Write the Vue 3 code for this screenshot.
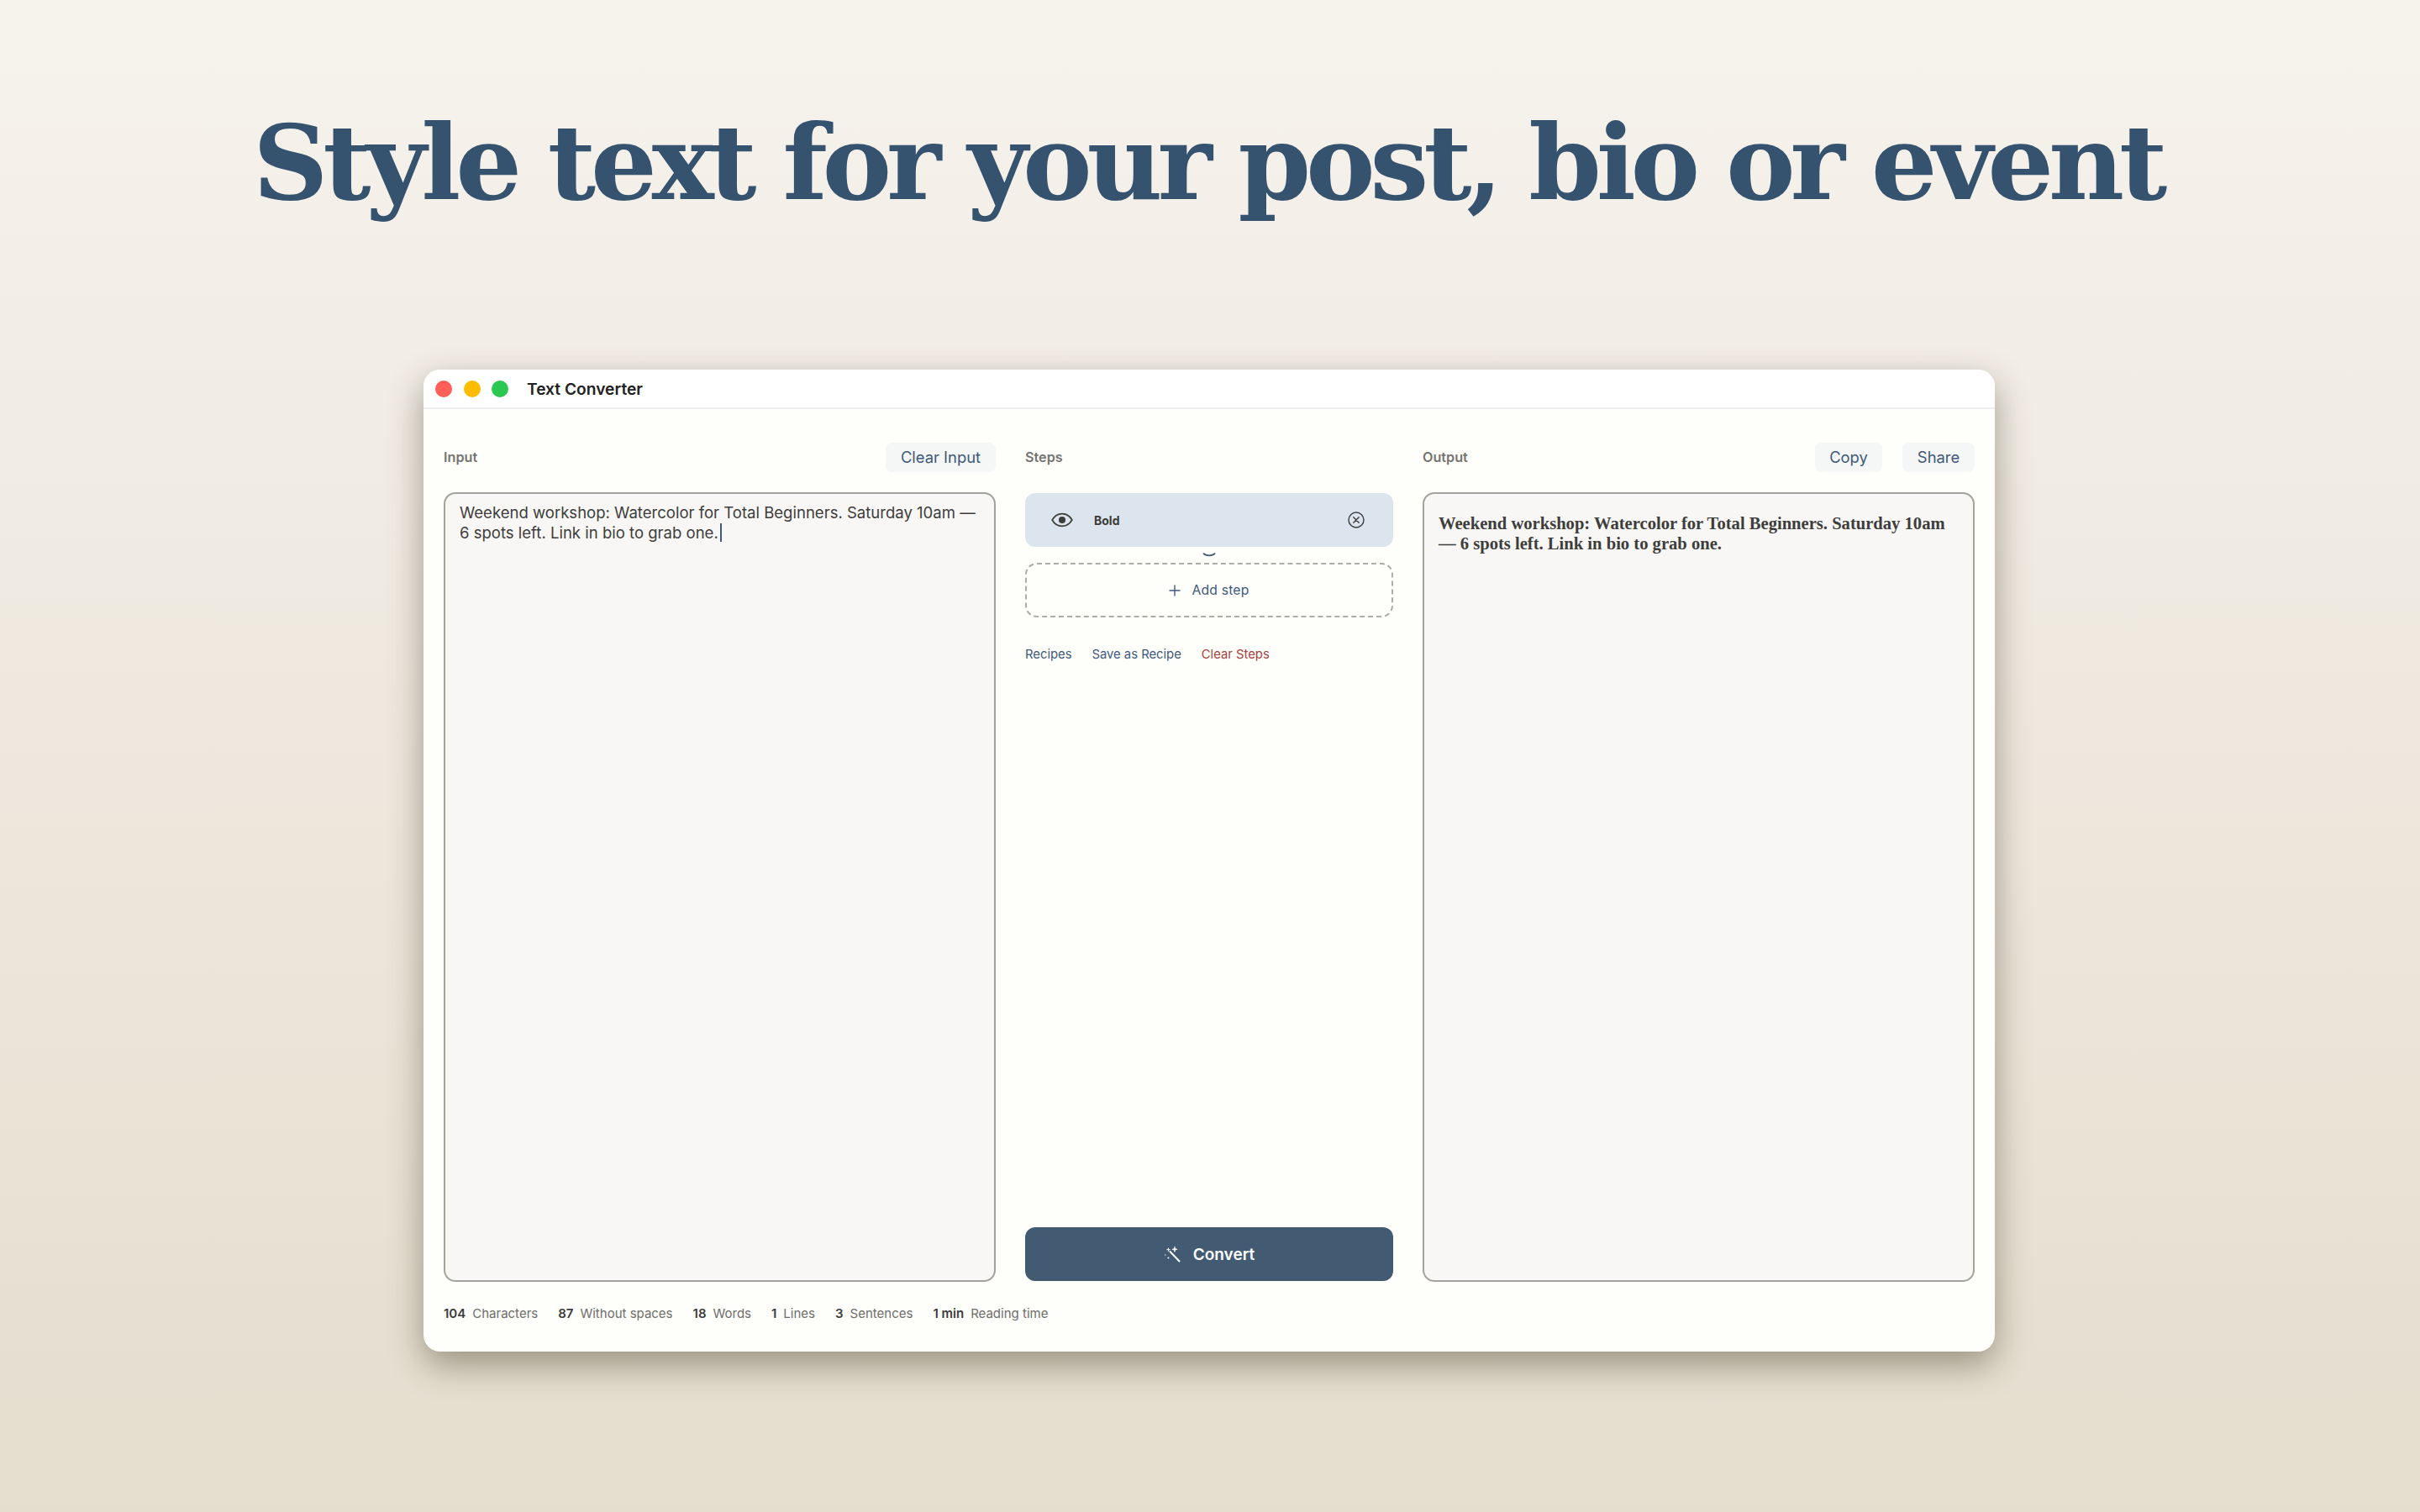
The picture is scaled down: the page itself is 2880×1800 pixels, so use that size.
<script setup>
const stats = [
  { n: '104', l: 'Characters' },
  { n: '87', l: 'Without spaces' },
  { n: '18', l: 'Words' },
  { n: '1', l: 'Lines' },
  { n: '3', l: 'Sentences' },
  { n: '1 min', l: 'Reading time' }
]
const sample = 'Weekend workshop: Watercolor for Total Beginners. Saturday 10am — 6 spots left. Link in bio to grab one.'
</script>

<template>
  <div class="page">
    <h1 class="headline">Style text for your post, bio or event</h1>
    <div class="window">
      <header class="titlebar">
        <div class="lights">
          <span class="light red"></span>
          <span class="light yellow"></span>
          <span class="light green"></span>
        </div>
        <span class="app-name">Text Converter</span>
      </header>
      <main class="content">
        <section class="col">
          <div class="col-head">
            <span class="label">Input</span>
            <button class="ghost">Clear Input</button>
          </div>
          <div class="editor input-box">{{ sample }}<span class="caret"></span></div>
        </section>

        <section class="col">
          <div class="col-head">
            <span class="label">Steps</span>
          </div>
          <div class="steps">
            <div class="step">
              <svg class="eye" viewBox="0 0 26 18" fill="none" stroke="currentColor" stroke-width="1.7">
                <path d="M1.2 9C4 4 8 1.6 13 1.6S22 4 24.8 9C22 14 18 16.4 13 16.4S4 14 1.2 9Z" />
                <circle cx="13" cy="9" r="3.2" fill="currentColor" />
              </svg>
              <span class="step-name">Bold</span>
              <svg class="close" viewBox="0 0 20 20" fill="none" stroke="currentColor" stroke-width="1.4" stroke-linecap="round">
                <circle cx="10" cy="10" r="9" />
                <path d="M6.8 6.8l6.4 6.4M13.2 6.8l-6.4 6.4" />
              </svg>
            </div>
            <svg class="chevron" viewBox="0 0 16 6" fill="none" stroke="currentColor" stroke-width="1.8" stroke-linecap="round">
              <path d="M1.5 1.2C4 4 12 4 14.5 1.2" />
            </svg>
            <button class="add-step">
              <svg class="plus" viewBox="0 0 14 14" fill="none" stroke="currentColor" stroke-width="1.4" stroke-linecap="round">
                <path d="M7 1v12M1 7h12" />
              </svg>
              <span>Add step</span>
            </button>
            <div class="links">
              <span class="link">Recipes</span>
              <span class="link">Save as Recipe</span>
              <span class="link danger">Clear Steps</span>
            </div>
            <button class="convert">
              <svg class="wand" viewBox="0 0 20 20" fill="none" stroke="currentColor" stroke-linecap="round" stroke-linejoin="round">
                <path d="M7.5 7l11 11.5" stroke-width="2" />
                <path d="M13 1.2l.7 2.4 2.4.7-2.4.7-.7 2.4-.7-2.4-2.4-.7 2.4-.7z" fill="currentColor" stroke-width=".6" />
                <path d="M5.5 3v3.4M3.8 4.7h3.4" stroke-width="1" />
                <circle cx="1.8" cy="11" r=".7" fill="currentColor" stroke="none" />
                <circle cx="5.4" cy="14.6" r="1" fill="currentColor" stroke="none" />
              </svg>
              <span>Convert</span>
            </button>
          </div>
        </section>

        <section class="col">
          <div class="col-head">
            <span class="label">Output</span>
            <div class="actions">
              <button class="ghost copy">Copy</button>
              <button class="ghost share">Share</button>
            </div>
          </div>
          <div class="editor output-box">{{ sample }}</div>
        </section>
      </main>
      <footer class="stats">
        <span v-for="s in stats" :key="s.l" class="stat"><b>{{ s.n }}</b><span>{{ s.l }}</span></span>
      </footer>
    </div>
  </div>
</template>

<style>
html, body { margin: 0; padding: 0; }
</style>

<style scoped>
.page {
  width: 2880px;
  height: 1800px;
  box-sizing: border-box;
  overflow: hidden;
  background: linear-gradient(180deg, #f6f3ed 0%, #e5ddce 100%);
  font-family: Inter, "Liberation Sans", sans-serif;
}
.headline {
  margin: 0;
  height: 440px;
  box-sizing: border-box;
  padding: 119px 6px 0 0;
  text-align: center;
  font-family: "DejaVu Serif", serif;
  font-weight: 700;
  font-size: 124px;
  line-height: 150px;
  letter-spacing: -6.2px;
  color: #35526f;
  white-space: nowrap;
}
.window {
  width: 1870px;
  height: 1169px;
  margin-left: 504px;
  display: flex;
  flex-direction: column;
  background: #fefefb;
  border-radius: 20px;
  box-shadow: 0 16px 42px rgba(60, 50, 30, 0.45);
  overflow: visible;
}
.titlebar {
  height: 47px;
  box-sizing: border-box;
  display: flex;
  align-items: center;
  background: #fff;
  border-bottom: 2px solid #eeeff0;
  border-radius: 20px 20px 0 0;
  padding: 1px 0 0 14px;
  flex: none;
}
.lights { display: flex; gap: 13.5px; }
.light { width: 20px; height: 20px; border-radius: 50%; }
.red { background: #ff5f57; }
.yellow { background: #febc00; }
.green { background: #2ac751; }
.app-name {
  margin-left: 22px;
  font-size: 19.2px;
  font-weight: 600;
  color: #222;
}
.content {
  display: grid;
  grid-template-columns: 657px 438px 657px;
  column-gap: 35px;
  padding: 39px 24px 0;
  height: 1039px;
  box-sizing: border-box;
  flex: none;
}
.col { display: flex; flex-direction: column; min-height: 0; }
.col-head {
  height: 36px;
  margin-bottom: 24px;
  display: flex;
  align-items: center;
  justify-content: space-between;
  flex: none;
}
.label { font-size: 16.2px; font-weight: 600; color: #757572; padding-bottom: 1px; }
.actions { display: flex; gap: 24px; }
button {
  font-family: inherit;
  border: 0;
  padding: 0;
  cursor: pointer;
}
.ghost {
  height: 35px;
  width: 131px;
  background: #f5f6f6;
  color: #41597a;
  font-size: 18.4px;
  border-radius: 8px;
}
.copy { width: 80px; }
.share { width: 86px; }
.editor {
  flex: 1;
  background: #f8f7f6;
  border: 2px solid #a3a39c;
  border-radius: 14px;
  box-sizing: border-box;
  color: #3d3d3b;
}
.input-box {
  padding: 11px 17px;
  font-size: 18.55px;
  line-height: 23.5px;
}
.caret {
  display: inline-block;
  width: 2px;
  height: 22px;
  margin-left: 2px;
  background: #3f5a75;
  vertical-align: -4px;
}
.output-box {
  padding: 23px 17px;
  font-family: "Liberation Serif", serif;
  font-weight: 700;
  font-size: 20.6px;
  line-height: 24px;
}
.steps { flex: 1; display: flex; flex-direction: column; min-height: 0; padding-top: 1px; }
.step {
  height: 64px;
  flex: none;
  box-sizing: border-box;
  display: flex;
  align-items: center;
  background: #dce4ed;
  border-radius: 12px;
  padding: 0 34px 0 31px;
  color: #3c3c3a;
}
.eye { width: 26px; height: 18px; flex: none; }
.step-name { margin-left: 25px; font-size: 14px; font-weight: 700; flex: 1; }
.close { width: 20px; height: 20px; flex: none; }
.chevron {
  width: 16px;
  height: 6px;
  color: #3f5a75;
  align-self: center;
  margin: 7px 0 6px;
  flex: none;
}
.add-step {
  height: 65px;
  flex: none;
  background: transparent;
  border: 2px dashed #adada7;
  border-radius: 14px;
  display: flex;
  align-items: center;
  justify-content: center;
  gap: 13px;
  color: #41597a;
  font-size: 15.7px;
  letter-spacing: 0.2px;
}
.plus { width: 14px; height: 14px; }
.links {
  display: flex;
  gap: 24px;
  margin-top: 35px;
  font-size: 14.8px;
  line-height: 19px;
}
.link { color: #41597a; }
.danger { color: #a4433f; }
.convert {
  margin-top: auto;
  margin-bottom: 1px;
  height: 64px;
  flex: none;
  background: #425b73;
  color: #fff;
  border-radius: 12px;
  display: flex;
  align-items: center;
  justify-content: center;
  gap: 15px;
  font-size: 19px;
  font-weight: 600;
}
.wand { width: 20px; height: 20px; }
.stats {
  display: flex;
  gap: 24px;
  padding: 28px 24px 0;
  font-size: 15px;
  line-height: 20px;
  color: #6d6d6a;
}
.stat { display: flex; gap: 8px; }
.stat b { color: #3c3c3a; font-weight: 600; }
</style>
